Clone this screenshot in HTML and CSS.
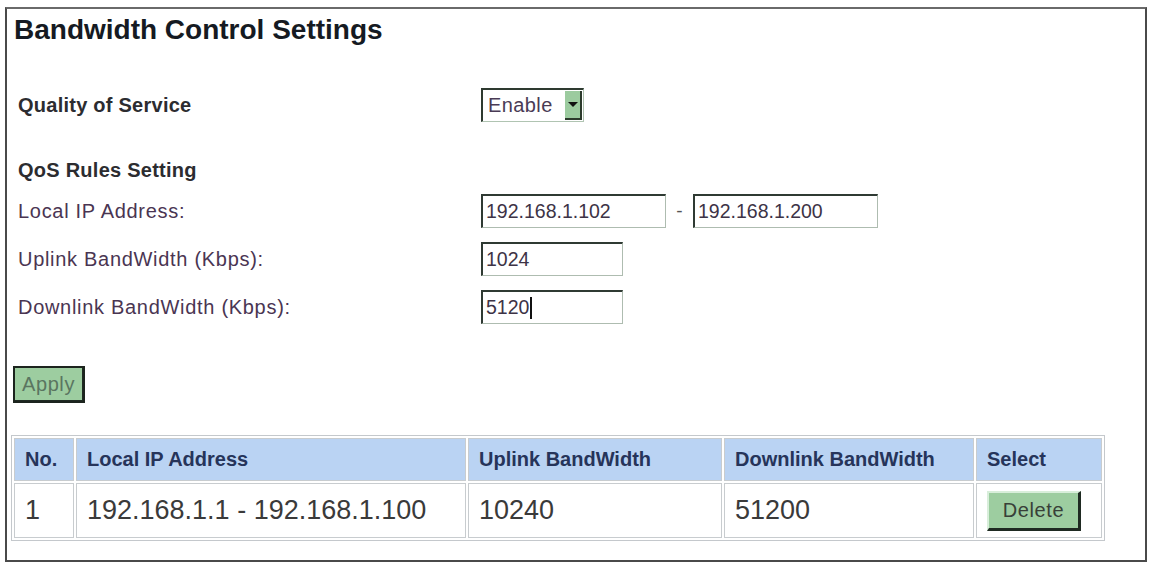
FILE: index.html
```html
<!DOCTYPE html>
<html lang="en">
<head>
  <meta charset="UTF-8">
  <title>Bandwidth Control Settings</title>
  <link rel="stylesheet" href="styles.css">
</head>
<body>
  <div class="frame">
    <h1 class="page-title">Bandwidth Control Settings</h1>

    <div class="form-grid">
      <div class="row-label strong">Quality of Service</div>
      <div class="row-control">
        <div class="select-box">
          <span class="select-value">Enable</span>
          <span class="select-arrow"></span>
        </div>
      </div>

      <div class="section-label strong">QoS Rules Setting</div>
      <div class="section-spacer"></div>

      <label class="row-label" for="ip-start">Local IP Address:</label>
      <div class="row-control">
        <input type="text" id="ip-start" class="field field-wide" value="192.168.1.102">
        <span class="range-dash">-</span>
        <input type="text" id="ip-end" class="field field-wide" value="192.168.1.200">
      </div>

      <label class="row-label" for="uplink">Uplink BandWidth (Kbps):</label>
      <div class="row-control">
        <input type="text" id="uplink" class="field field-short" value="1024">
      </div>

      <label class="row-label">Downlink BandWidth (Kbps):</label>
      <div class="row-control">
        <div class="field field-short field-active">5120<span class="caret"></span></div>
      </div>
    </div>

    <button type="button" class="btn btn-apply">Apply</button>

    <table class="rules-table">
      <colgroup>
        <col class="col-no">
        <col class="col-ip">
        <col class="col-up">
        <col class="col-down">
        <col class="col-select">
      </colgroup>
      <thead>
        <tr>
          <th>No.</th>
          <th>Local IP Address</th>
          <th>Uplink BandWidth</th>
          <th>Downlink BandWidth</th>
          <th>Select</th>
        </tr>
      </thead>
      <tbody>
        <tr>
          <td>1</td>
          <td>192.168.1.1 - 192.168.1.100</td>
          <td>10240</td>
          <td>51200</td>
          <td><button type="button" class="btn btn-delete">Delete</button></td>
        </tr>
      </tbody>
    </table>
  </div>
</body>
</html>
```

FILE: styles.css
```css
/* ----------------------------------
   Page frame
----------------------------------- */
* {
  box-sizing: border-box;
  margin: 0;
  padding: 0;
}
html, body {
  height: 100%;
}
body {
  background: #fff;
  font-family: 'Liberation Sans', Arial, sans-serif;
  color: #333;
  padding: 7px 4px 2px 5px;
}
.frame {
  height: 555px;
  border: 2px solid #4a4a4a;
  border-top-color: #6a6a6a;
  padding: 5px 0 0 4px;
}
.page-title {
  font-size: 28px;
  font-weight: 700;
  line-height: 32px;
  color: #151a22;
  padding-left: 3px;
}

/* ----------------------------------
   Settings form
----------------------------------- */
.form-grid {
  display: grid;
  grid-template-columns: 463px auto;
  align-items: center;
  margin-top: 35px;
  padding-left: 7px;
}
.row-label {
  height: 48px;
  line-height: 48px;
  font-size: 20px;
  letter-spacing: 0.7px;
  color: #4a3552;
}
.strong {
  font-weight: 700;
  letter-spacing: 0.25px;
  color: #2c2c30;
}
.section-label {
  height: 34px;
  line-height: 34px;
  margin-top: 24px;
  font-size: 20px;
  font-weight: 700;
  color: #2c2c30;
}
.section-spacer {
  height: 34px;
  margin-top: 24px;
}
.row-control {
  height: 48px;
  display: flex;
  align-items: center;
}

.select-box {
  width: 103px;
  height: 34px;
  display: flex;
  border-top: 2px solid #2e3a30;
  border-left: 2px solid #2e3a30;
  border-right: 1px solid #b0c4b2;
  border-bottom: 1px solid #b0c4b2;
  background: #fff;
}
.select-value {
  flex: 1;
  font-size: 20px;
  line-height: 30px;
  padding-left: 5px;
  letter-spacing: 0.4px;
  color: #4a3b55;
}
.select-arrow {
  width: 17px;
  margin: 1px 1px 1px 0;
  background: #9ccb9f;
  border-right: 2px solid #2c3a2c;
  border-bottom: 2px solid #2c3a2c;
  position: relative;
}
.select-arrow::after {
  content: '';
  position: absolute;
  left: 3px;
  top: 11px;
  border-left: 5px solid transparent;
  border-right: 5px solid transparent;
  border-top: 5px solid #111;
}

.field {
  height: 34px;
  border-top: 2px solid #2f3a33;
  border-left: 2px solid #2f3a33;
  border-right: 1px solid #aebcb0;
  border-bottom: 1px solid #aebcb0;
  font-family: 'Liberation Sans', Arial, sans-serif;
  font-size: 19.5px;
  line-height: 31px;
  color: #3d3346;
  padding: 0 0 0 3px;
  background: #fff;
  outline: none;
}
.field-wide {
  width: 185px;
}
.field-short {
  width: 142px;
}
.field-active {
  display: flex;
  align-items: center;
}
.caret {
  display: inline-block;
  width: 2px;
  height: 22px;
  margin-left: 1px;
  background: #111;
}
.range-dash {
  width: 27px;
  text-align: center;
  font-size: 19px;
  color: #555;
}

/* ----------------------------------
   Buttons
----------------------------------- */
.btn {
  font-family: 'Liberation Sans', Arial, sans-serif;
  font-size: 20px;
  letter-spacing: 0.6px;
  background: #9dcda0;
  border-top: 2px solid #d8eeda;
  border-left: 2px solid #d8eeda;
  border-right: 3px solid #1f2a22;
  border-bottom: 3px solid #1f2a22;
  cursor: pointer;
}
.btn-apply {
  display: block;
  width: 72px;
  height: 37px;
  margin: 35px 0 0 2px;
  color: #5a7560;
  outline: 2px solid #1c241e;
  outline-offset: -2px;
}
.btn-delete {
  width: 94px;
  height: 40px;
  color: #384038;
}

/* ----------------------------------
   Rules table
----------------------------------- */
.rules-table {
  margin-top: 32px;
  width: 1093px;
  table-layout: fixed;
  border-collapse: separate;
  border-spacing: 2px;
  border: 1px solid #c4c8cc;
}
.col-no { width: 60px; }
.col-ip { width: 390px; }
.col-up { width: 254px; }
.col-down { width: 250px; }
.col-select { width: 126px; }
.rules-table th,
.rules-table td {
  border: 1px solid #c8cccf;
  text-align: left;
  padding-left: 10px;
  white-space: nowrap;
}
.rules-table th {
  height: 43px;
  background: #bad3f3;
  font-size: 20px;
  font-weight: 700;
  color: #26345a;
}
.rules-table td {
  height: 55px;
  font-size: 27px;
  color: #3a3a3a;
  background: #fff;
}
```
